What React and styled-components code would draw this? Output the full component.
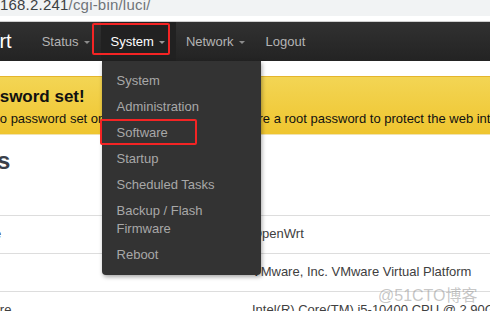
import React from 'react'
import styled, { createGlobalStyle } from 'styled-components'

const GlobalStyle = createGlobalStyle`
  html, body {
    margin: 0;
    padding: 0;
    background: #fff;
    overflow: hidden;
  }
  body {
    font-family: "Liberation Sans", Arial, sans-serif;
  }
`

const Page = styled.div`
  position: relative;
  width: 490px;
  height: 311px;
  overflow: hidden;
  background: #fff;
`

const AddressBar = styled.div`
  height: 16px;
  background: #f1f3f4;
  overflow: hidden;
  white-space: nowrap;
`

const Url = styled.div`
  margin-top: -3px;
  margin-left: -30px;
  font-size: 15px;
  line-height: 15px;
  letter-spacing: 0.2px;
  color: #3c4043;

  span {
    color: #6f7479;
  }
`

const BarGap = styled.div`
  height: 5px;
  background: #fff;
  border-bottom: 1px solid #cfcfcf;
`

const Navbar = styled.nav`
  display: flex;
  align-items: stretch;
  height: 39px;
  margin-left: -68px;
  background: linear-gradient(#313131, #232323);
  white-space: nowrap;
`

const Brand = styled.a`
  display: flex;
  align-items: center;
  margin-right: 20px;
  font-size: 20px;
  color: #fff;
  text-decoration: none;
`

const NavItem = styled.div`
  position: relative;
  display: flex;
  align-items: center;
  padding: 0 10px 0 10px;
  font-size: 13px;
  color: ${p => (p.$active ? '#fff' : '#b4b4b4')};
  background: ${p => (p.$active ? '#212121' : 'transparent')};
  cursor: pointer;
`

const Caret = styled.span`
  display: inline-block;
  margin-left: 5px;
  margin-right: 1px;
  margin-top: 1px;
  border-left: 3px solid transparent;
  border-right: 3px solid transparent;
  border-top: 3px solid ${p => (p.$active ? '#9a9a9a' : '#8c8c8c')};
`

const Dropdown = styled.ul`
  position: absolute;
  top: 100%;
  left: 1px;
  z-index: 5;
  width: 159px;
  margin: 0;
  padding: 7px 0 7px;
  list-style: none;
  background: #333;
  border-radius: 0 0 4px 4px;
  box-shadow: 1px 2px 4px rgba(0, 0, 0, 0.35);
  white-space: normal;
`

const MenuItem = styled.li`
  padding: 4px 15px;
  font-size: 13px;
  line-height: 18px;
  color: #a8a8a8;
`

const Main = styled.main`
  overflow: hidden;
  white-space: nowrap;
`

const Container = styled.div`
  margin-left: -58px;
  width: 800px;
  padding-top: 15px;
`

const Alert = styled.div`
  padding: 10px 0 6px;
  background: linear-gradient(#f3d554, #efc52f);
  border-top: 1px solid #e4b52c;
  border-bottom: 1px solid #f0e2b0;
  color: #111;
`

const AlertTitle = styled.h4`
  margin: 0 0 3px 1px;
  font-size: 17px;
  line-height: 20px;
  font-weight: bold;
`

const AlertText = styled.p`
  margin: 0;
  font-size: 13px;
  line-height: 18px;
`

const Heading = styled.h2`
  margin: 12px 0 40px -5px;
  font-size: 24px;
  line-height: 28px;
  font-weight: bold;
  color: #3a3f4a;
`

const Table = styled.div`
  display: grid;
  grid-template-columns: 310px 1fr;
`

const Cell = styled.div`
  padding: 9px 0 10px;
  border-top: 1px solid #dddddd;
  font-size: 13px;
  line-height: 18px;
  color: #404040;
`

const Annotation = styled.div`
  position: absolute;
  z-index: 10;
  border: 2px solid #f42424;
  border-radius: 2px;
  pointer-events: none;
`

const Watermark = styled.div`
  position: absolute;
  z-index: 20;
  left: 378px;
  top: 282px;
  font-family: "Liberation Sans", "Noto Sans CJK SC", sans-serif;
  font-size: 16px;
  color: rgba(150, 150, 150, 0.55);
  white-space: nowrap;
`

const menu = [
  'System',
  'Administration',
  'Software',
  'Startup',
  'Scheduled Tasks',
  'Backup / Flash Firmware',
  'Reboot',
]

const rows = [
  ['Hostname', 'OpenWrt'],
  ['Model', 'VMware, Inc. VMware Virtual Platform'],
  ['Architecture', 'Intel(R) Core(TM) i5-10400 CPU @ 2.90GHz'],
]

export default function App() {
  return (
    <Page>
      <GlobalStyle />
      <AddressBar>
        <Url>192.168.2.241<span>/cgi-bin/luci/</span></Url>
      </AddressBar>
      <BarGap />
      <Navbar>
        <Brand>OpenWrt</Brand>
        <NavItem>Status<Caret /></NavItem>
        <NavItem $active>
          System<Caret $active />
          <Dropdown>
            {menu.map(m => <MenuItem key={m}>{m}</MenuItem>)}
          </Dropdown>
        </NavItem>
        <NavItem>Network<Caret /></NavItem>
        <NavItem>Logout</NavItem>
      </Navbar>
      <Main>
        <Container>
          <Alert>
            <AlertTitle>No password set!</AlertTitle>
            <AlertText>
              There is no password set on this router. Please configure a root password to protect the web interface.
            </AlertText>
          </Alert>
          <Heading>Status</Heading>
          <Table>
            {rows.map(([k, v]) => (
              <React.Fragment key={k}>
                <Cell>{k}</Cell>
                <Cell>{v}</Cell>
              </React.Fragment>
            ))}
          </Table>
        </Container>
      </Main>
      <Annotation style={{ left: 92, top: 23, width: 74, height: 28 }} />
      <Annotation style={{ left: 100, top: 119, width: 93, height: 22 }} />
      <Watermark>@51CTO博客</Watermark>
    </Page>
  )
}
